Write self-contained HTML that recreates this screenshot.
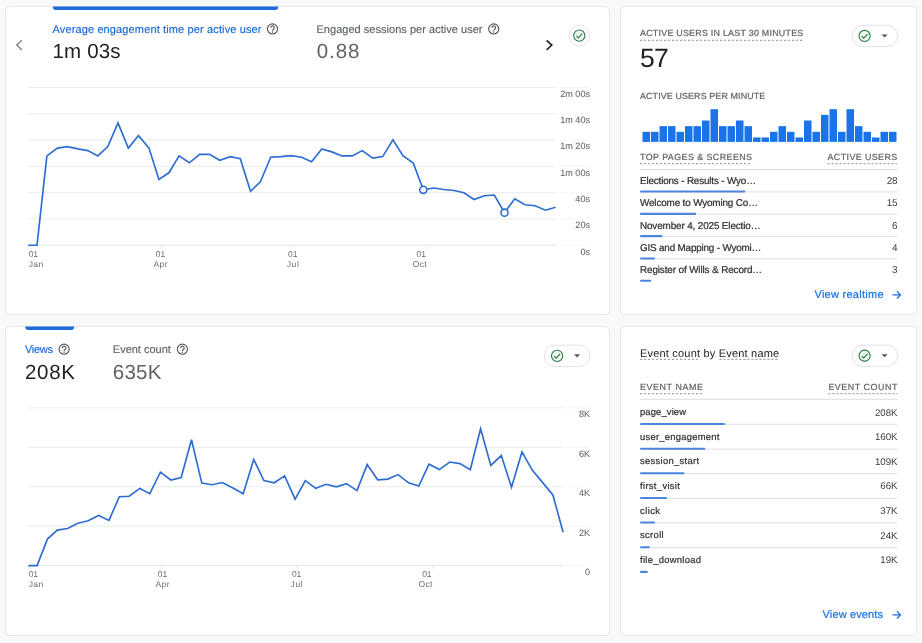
<!DOCTYPE html>
<html><head><meta charset="utf-8"><title>Analytics</title>
<style>
html,body{margin:0;padding:0}
body{width:922px;height:643px;overflow:hidden;background:#f8f9fa;font-family:"Liberation Sans",sans-serif;position:relative}
.card{position:absolute;background:#fff;border:1px solid #e6e8eb;border-radius:5px;box-sizing:border-box}
.t{position:absolute;white-space:nowrap;line-height:1;text-rendering:geometricPrecision}
svg{position:absolute;left:0;top:0}
</style></head><body>
<div class="card" style="left:5px;top:6px;width:605px;height:309px"></div>
<div class="card" style="left:620px;top:6px;width:297px;height:309px"></div>
<div class="card" style="left:5px;top:326px;width:605px;height:310px"></div>
<div class="card" style="left:620px;top:326px;width:297px;height:310px"></div>
<svg width="922" height="643" viewBox="0 0 922 643">
<line x1="28.2" x2="555.6" y1="87.50" y2="87.50" stroke="#ececee" stroke-width="1"/>
<line x1="28.2" x2="555.6" y1="113.78" y2="113.78" stroke="#ececee" stroke-width="1"/>
<line x1="28.2" x2="555.6" y1="140.06" y2="140.06" stroke="#ececee" stroke-width="1"/>
<line x1="28.2" x2="555.6" y1="166.34" y2="166.34" stroke="#ececee" stroke-width="1"/>
<line x1="28.2" x2="555.6" y1="192.62" y2="192.62" stroke="#ececee" stroke-width="1"/>
<line x1="28.2" x2="555.6" y1="218.90" y2="218.90" stroke="#ececee" stroke-width="1"/>
<line x1="28.2" x2="555.6" y1="245.18" y2="245.18" stroke="#e3e4e6" stroke-width="1"/>
<line x1="28.2" x2="563.3" y1="407.90" y2="407.90" stroke="#ececee" stroke-width="1"/>
<line x1="28.2" x2="563.3" y1="447.33" y2="447.33" stroke="#ececee" stroke-width="1"/>
<line x1="28.2" x2="563.3" y1="486.76" y2="486.76" stroke="#ececee" stroke-width="1"/>
<line x1="28.2" x2="563.3" y1="526.19" y2="526.19" stroke="#ececee" stroke-width="1"/>
<line x1="28.2" x2="563.3" y1="565.62" y2="565.62" stroke="#e3e4e6" stroke-width="1"/>
<line x1="558.5" x2="589.8" y1="87.50" y2="87.50" stroke="#f5f5f6" stroke-width="1"/>
<line x1="558.5" x2="589.8" y1="113.78" y2="113.78" stroke="#f5f5f6" stroke-width="1"/>
<line x1="558.5" x2="589.8" y1="140.06" y2="140.06" stroke="#f5f5f6" stroke-width="1"/>
<line x1="558.5" x2="589.8" y1="166.34" y2="166.34" stroke="#f5f5f6" stroke-width="1"/>
<line x1="558.5" x2="589.8" y1="192.62" y2="192.62" stroke="#f5f5f6" stroke-width="1"/>
<line x1="558.5" x2="589.8" y1="218.90" y2="218.90" stroke="#f5f5f6" stroke-width="1"/>
<line x1="558.5" x2="589.8" y1="245.18" y2="245.18" stroke="#f5f5f6" stroke-width="1"/>
<line x1="565.8" x2="589.8" y1="407.90" y2="407.90" stroke="#f5f5f6" stroke-width="1"/>
<line x1="565.8" x2="589.8" y1="447.33" y2="447.33" stroke="#f5f5f6" stroke-width="1"/>
<line x1="565.8" x2="589.8" y1="486.76" y2="486.76" stroke="#f5f5f6" stroke-width="1"/>
<line x1="565.8" x2="589.8" y1="526.19" y2="526.19" stroke="#f5f5f6" stroke-width="1"/>
<line x1="565.8" x2="589.8" y1="565.62" y2="565.62" stroke="#f5f5f6" stroke-width="1"/>
<line x1="28.7" x2="28.7" y1="245.2" y2="248.8" stroke="#ececee" stroke-width="1"/>
<line x1="160.4" x2="160.4" y1="245.2" y2="248.8" stroke="#ececee" stroke-width="1"/>
<line x1="292.9" x2="292.9" y1="245.2" y2="248.8" stroke="#ececee" stroke-width="1"/>
<line x1="426.5" x2="426.5" y1="245.2" y2="248.8" stroke="#ececee" stroke-width="1"/>
<line x1="28.7" x2="28.7" y1="565.6" y2="569.2" stroke="#ececee" stroke-width="1"/>
<line x1="162.2" x2="162.2" y1="565.6" y2="569.2" stroke="#ececee" stroke-width="1"/>
<line x1="296.6" x2="296.6" y1="565.6" y2="569.2" stroke="#ececee" stroke-width="1"/>
<line x1="432.5" x2="432.5" y1="565.6" y2="569.2" stroke="#ececee" stroke-width="1"/>
<polyline points="28.2,245.2 37,245.2 46.9,155.9 57.4,148.1 67.4,146.6 77.9,148.9 87.8,150.6 97.8,155.9 107.8,146.6 118,122.9 128.3,148.1 138.5,135.6 149,148.1 158.9,179.5 168.9,172.8 179.1,155.9 189.4,162.8 199.6,154.4 209.6,154.4 219.8,160.3 230.3,156.6 240.3,158.8 250.5,191.3 260.4,181.8 270.7,157.3 280.9,156.6 291.1,155.6 301.6,157.3 311.6,161.8 321.8,148.9 331.8,151.9 342,155.9 352.2,155.9 362.2,150.6 372.7,158.1 382.7,156.6 392.9,139.9 403.1,155.9 413.3,163.1 423.3,189.8 433.8,188 443.8,189.5 454,190.5 463.9,192.8 474.1,199.5 484.3,195.8 494.3,195 504.5,212.7 514.7,198.8 525,204.7 535.2,205.7 545.4,210.2 555.6,207.2" fill="none" stroke="#2d6dd2" stroke-width="1.65" stroke-linejoin="miter" stroke-linecap="butt"/>
<polyline points="28.4,565.6 37.1,565.6 47.4,539.1 57.3,530.1 67.6,528.5 77.9,523.2 88.2,520.8 98.7,515.5 109,520.4 119.3,496.8 129.2,496.2 139.8,488.4 149.8,493.7 160.4,472.2 170.9,480 181.2,477.5 191.5,439.8 201.8,483.1 212,484.7 222.3,482.5 232.9,488.1 243.2,493.7 253.7,459.4 263.9,480.6 274.2,482.8 284.6,475.9 295.1,499.1 305.3,480.6 315.8,488.3 326,484.3 336.3,486.8 346.5,483.6 357,490.6 367.2,464.6 377.7,479.8 387.9,479.1 398.1,474.6 408.6,482.8 418.8,486.1 429,464.2 439.4,469.6 449.7,462 459.9,463.6 470.3,469.8 480.6,428.7 490.8,465.4 501.3,455.6 511.5,487.3 522,451.9 532.2,470.1 542.7,482.6 552.9,495 563.1,532.2" fill="none" stroke="#2d6dd2" stroke-width="1.65" stroke-linejoin="miter" stroke-linecap="butt"/>
<circle cx="423.3" cy="189.8" r="3.55" fill="#fff" stroke="#2d6dd2" stroke-width="1.6"/>
<circle cx="504.5" cy="212.7" r="3.55" fill="#fff" stroke="#2d6dd2" stroke-width="1.6"/>
<rect x="642.50" y="131.80" width="7.5" height="10.10" fill="#1a73e8"/>
<rect x="651.00" y="131.80" width="7.5" height="10.10" fill="#1a73e8"/>
<rect x="659.50" y="126.15" width="7.5" height="15.75" fill="#1a73e8"/>
<rect x="668.00" y="126.15" width="7.5" height="15.75" fill="#1a73e8"/>
<rect x="676.50" y="131.80" width="7.5" height="10.10" fill="#1a73e8"/>
<rect x="685.00" y="126.15" width="7.5" height="15.75" fill="#1a73e8"/>
<rect x="693.50" y="126.15" width="7.5" height="15.75" fill="#1a73e8"/>
<rect x="702.00" y="120.50" width="7.5" height="21.40" fill="#1a73e8"/>
<rect x="710.50" y="109.20" width="7.5" height="32.70" fill="#1a73e8"/>
<rect x="719.00" y="126.15" width="7.5" height="15.75" fill="#1a73e8"/>
<rect x="727.50" y="126.15" width="7.5" height="15.75" fill="#1a73e8"/>
<rect x="736.00" y="120.50" width="7.5" height="21.40" fill="#1a73e8"/>
<rect x="744.50" y="126.15" width="7.5" height="15.75" fill="#1a73e8"/>
<rect x="753.00" y="137.45" width="7.5" height="4.45" fill="#1a73e8"/>
<rect x="761.50" y="137.45" width="7.5" height="4.45" fill="#1a73e8"/>
<rect x="770.00" y="131.80" width="7.5" height="10.10" fill="#1a73e8"/>
<rect x="778.50" y="126.15" width="7.5" height="15.75" fill="#1a73e8"/>
<rect x="787.00" y="131.80" width="7.5" height="10.10" fill="#1a73e8"/>
<rect x="795.50" y="137.45" width="7.5" height="4.45" fill="#1a73e8"/>
<rect x="804.00" y="120.50" width="7.5" height="21.40" fill="#1a73e8"/>
<rect x="812.50" y="131.80" width="7.5" height="10.10" fill="#1a73e8"/>
<rect x="821.00" y="114.85" width="7.5" height="27.05" fill="#1a73e8"/>
<rect x="829.50" y="109.20" width="7.5" height="32.70" fill="#1a73e8"/>
<rect x="838.00" y="131.80" width="7.5" height="10.10" fill="#1a73e8"/>
<rect x="846.50" y="109.20" width="7.5" height="32.70" fill="#1a73e8"/>
<rect x="855.00" y="126.15" width="7.5" height="15.75" fill="#1a73e8"/>
<rect x="863.50" y="131.80" width="7.5" height="10.10" fill="#1a73e8"/>
<rect x="872.00" y="137.45" width="7.5" height="4.45" fill="#1a73e8"/>
<rect x="880.50" y="131.80" width="7.5" height="10.10" fill="#1a73e8"/>
<rect x="889.00" y="131.80" width="7.5" height="10.10" fill="#1a73e8"/>
<line x1="640" x2="897.5" y1="169.5" y2="169.5" stroke="#d9dadc" stroke-width="1"/>
<line x1="640" x2="897.5" y1="191.90" y2="191.90" stroke="#e5e5e7" stroke-width="1.2"/>
<rect x="640" y="190.50" width="105.3" height="2.1" rx="1" fill="#4a86de"/>
<line x1="640" x2="897.5" y1="214.20" y2="214.20" stroke="#e5e5e7" stroke-width="1.2"/>
<rect x="640" y="212.80" width="56.2" height="2.1" rx="1" fill="#4a86de"/>
<line x1="640" x2="897.5" y1="236.50" y2="236.50" stroke="#e5e5e7" stroke-width="1.2"/>
<rect x="640" y="235.10" width="22.5" height="2.1" rx="1" fill="#4a86de"/>
<line x1="640" x2="897.5" y1="258.80" y2="258.80" stroke="#e5e5e7" stroke-width="1.2"/>
<rect x="640" y="257.40" width="15" height="2.1" rx="1" fill="#4a86de"/>
<rect x="640" y="279.70" width="11.2" height="2.1" rx="1" fill="#4a86de"/>
<line x1="640" x2="897.5" y1="399.2" y2="399.2" stroke="#d9dadc" stroke-width="1"/>
<line x1="640" x2="897.5" y1="424.40" y2="424.40" stroke="#e5e5e7" stroke-width="1.2"/>
<rect x="640" y="423.00" width="85" height="2.1" rx="1" fill="#4a86de"/>
<line x1="640" x2="897.5" y1="449.03" y2="449.03" stroke="#e5e5e7" stroke-width="1.2"/>
<rect x="640" y="447.63" width="65.4" height="2.1" rx="1" fill="#4a86de"/>
<line x1="640" x2="897.5" y1="473.66" y2="473.66" stroke="#e5e5e7" stroke-width="1.2"/>
<rect x="640" y="472.26" width="44.5" height="2.1" rx="1" fill="#4a86de"/>
<line x1="640" x2="897.5" y1="498.29" y2="498.29" stroke="#e5e5e7" stroke-width="1.2"/>
<rect x="640" y="496.89" width="27" height="2.1" rx="1" fill="#4a86de"/>
<line x1="640" x2="897.5" y1="522.92" y2="522.92" stroke="#e5e5e7" stroke-width="1.2"/>
<rect x="640" y="521.52" width="15.1" height="2.1" rx="1" fill="#4a86de"/>
<line x1="640" x2="897.5" y1="547.55" y2="547.55" stroke="#e5e5e7" stroke-width="1.2"/>
<rect x="640" y="546.15" width="9.8" height="2.1" rx="1" fill="#4a86de"/>
<rect x="640" y="570.78" width="7.8" height="2.1" rx="1" fill="#4a86de"/>
<line x1="640" x2="803.4" y1="40.4" y2="40.4" stroke="#a3a8ad" stroke-width="1.25" stroke-dasharray="2.2 1.8"/>
<line x1="640" x2="752.2" y1="163.7" y2="163.7" stroke="#a3a8ad" stroke-width="1.25" stroke-dasharray="2.2 1.8"/>
<line x1="827.5" x2="897.2" y1="163.7" y2="163.7" stroke="#a3a8ad" stroke-width="1.25" stroke-dasharray="2.2 1.8"/>
<line x1="640" x2="700.3" y1="359.3" y2="359.3" stroke="#a3a8ad" stroke-width="1.25" stroke-dasharray="2.2 1.8"/>
<line x1="719.3" x2="779.2" y1="359.3" y2="359.3" stroke="#a3a8ad" stroke-width="1.25" stroke-dasharray="2.2 1.8"/>
<line x1="640" x2="703" y1="393.7" y2="393.7" stroke="#a3a8ad" stroke-width="1.25" stroke-dasharray="2.2 1.8"/>
<line x1="828.4" x2="897.5" y1="393.7" y2="393.7" stroke="#a3a8ad" stroke-width="1.25" stroke-dasharray="2.2 1.8"/>
<path d="M52.8 6.5 H278.2 V7 a3 3 0 0 1 -3 3 H55.8 a3 3 0 0 1 -3 -3 Z" fill="#1f6bda"/>
<path d="M25.3 326.5 H74.2 V327 a3 3 0 0 1 -3 3 H28.3 a3 3 0 0 1 -3 -3 Z" fill="#1f6bda"/>
<polyline points="21.8,40.3 16.7,45.1 21.8,49.9" fill="none" stroke="#868a8f" stroke-width="1.45"/>
<polyline points="546.6,40.3 551.8,45.1 546.6,49.9" fill="none" stroke="#202124" stroke-width="1.6"/>
<g transform="translate(272.5,28.9)"><circle r="5.05" fill="none" stroke="#55595e" stroke-width="1.15"/><path d="M-1.8 -1.2 a1.8 1.8 0 1 1 2.8 1.5 c-0.7 0.45 -1 0.8 -1 1.5" fill="none" stroke="#55595e" stroke-width="1.15"/><circle cx="0" cy="3.1" r="0.7" fill="#55595e"/></g>
<g transform="translate(493.7,28.9)"><circle r="5.05" fill="none" stroke="#55595e" stroke-width="1.15"/><path d="M-1.8 -1.2 a1.8 1.8 0 1 1 2.8 1.5 c-0.7 0.45 -1 0.8 -1 1.5" fill="none" stroke="#55595e" stroke-width="1.15"/><circle cx="0" cy="3.1" r="0.7" fill="#55595e"/></g>
<g transform="translate(64.1,349.2)"><circle r="5.05" fill="none" stroke="#55595e" stroke-width="1.15"/><path d="M-1.8 -1.2 a1.8 1.8 0 1 1 2.8 1.5 c-0.7 0.45 -1 0.8 -1 1.5" fill="none" stroke="#55595e" stroke-width="1.15"/><circle cx="0" cy="3.1" r="0.7" fill="#55595e"/></g>
<g transform="translate(182.4,349.2)"><circle r="5.05" fill="none" stroke="#55595e" stroke-width="1.15"/><path d="M-1.8 -1.2 a1.8 1.8 0 1 1 2.8 1.5 c-0.7 0.45 -1 0.8 -1 1.5" fill="none" stroke="#55595e" stroke-width="1.15"/><circle cx="0" cy="3.1" r="0.7" fill="#55595e"/></g>
<circle cx="579.3" cy="35.6" r="10.3" fill="#fff" stroke="#e2e3e6" stroke-width="1"/>
<g transform="translate(579.3,35.6)"><circle r="5.6" fill="#f1f9f3" stroke="#2a7a45" stroke-width="1.1"/><polyline points="-2.9,0.3 -0.9,2.3 3,-1.9" fill="none" stroke="#2a7a45" stroke-width="1.15"/></g>
<rect x="852" y="25.3" width="45.5" height="21.3" rx="10.65" fill="#fff" stroke="#e2e3e6" stroke-width="1"/>
<g transform="translate(864.6,35.95)"><circle r="5.6" fill="#f1f9f3" stroke="#2a7a45" stroke-width="1.1"/><polyline points="-2.9,0.3 -0.9,2.3 3,-1.9" fill="none" stroke="#2a7a45" stroke-width="1.15"/></g>
<path d="M881.6 34.45 h6 l-3 3.1 z" fill="#55585c"/>
<rect x="544.5" y="345.2" width="45.5" height="21.3" rx="10.65" fill="#fff" stroke="#e2e3e6" stroke-width="1"/>
<g transform="translate(557.1,355.84999999999997)"><circle r="5.6" fill="#f1f9f3" stroke="#2a7a45" stroke-width="1.1"/><polyline points="-2.9,0.3 -0.9,2.3 3,-1.9" fill="none" stroke="#2a7a45" stroke-width="1.15"/></g>
<path d="M574.1 354.34999999999997 h6 l-3 3.1 z" fill="#55585c"/>
<rect x="852" y="345.1" width="45.5" height="21.3" rx="10.65" fill="#fff" stroke="#e2e3e6" stroke-width="1"/>
<g transform="translate(864.6,355.75)"><circle r="5.6" fill="#f1f9f3" stroke="#2a7a45" stroke-width="1.1"/><polyline points="-2.9,0.3 -0.9,2.3 3,-1.9" fill="none" stroke="#2a7a45" stroke-width="1.15"/></g>
<path d="M881.6 354.25 h6 l-3 3.1 z" fill="#55585c"/>
<path d="M892.6 294.9 h7.7 M896.90 291.30 l3.6 3.6 l-3.6 3.6" fill="none" stroke="#1a73e8" stroke-width="1.25"/>
<path d="M892.6 614.9 h7.7 M896.90 611.30 l3.6 3.6 l-3.6 3.6" fill="none" stroke="#1a73e8" stroke-width="1.25"/>
</svg>
<div id="txt" style="position:absolute;left:0;top:0;width:922px;height:643px;will-change:transform">
<span class="t" style="left:52.50px;top:25px;font-size:11px;color:#1967d2;letter-spacing:0.131px;-webkit-text-stroke:0.15px #1967d2;">Average engagement time per active user</span>
<span class="t" style="left:52.50px;top:42px;font-size:20.5px;color:#202124;letter-spacing:0.155px;">1m 03s</span>
<span class="t" style="left:316.50px;top:25px;font-size:11px;color:#5f6368;letter-spacing:0.029px;-webkit-text-stroke:0.15px #5f6368;">Engaged sessions per active user</span>
<span class="t" style="left:316.80px;top:42px;font-size:20.5px;color:#5f6368;letter-spacing:0.867px;">0.88</span>
<span class="t" style="left:560.18px;top:90px;font-size:9.1px;color:#686c71;-webkit-text-stroke:0.1px #686c71;">2m 00s</span>
<span class="t" style="left:560.18px;top:116px;font-size:9.1px;color:#686c71;-webkit-text-stroke:0.1px #686c71;">1m 40s</span>
<span class="t" style="left:560.18px;top:142px;font-size:9.1px;color:#686c71;-webkit-text-stroke:0.1px #686c71;">1m 20s</span>
<span class="t" style="left:560.18px;top:169px;font-size:9.1px;color:#686c71;-webkit-text-stroke:0.1px #686c71;">1m 00s</span>
<span class="t" style="left:575.34px;top:195px;font-size:9.1px;color:#686c71;-webkit-text-stroke:0.1px #686c71;">40s</span>
<span class="t" style="left:575.34px;top:221px;font-size:9.1px;color:#686c71;-webkit-text-stroke:0.1px #686c71;">20s</span>
<span class="t" style="left:580.40px;top:248px;font-size:9.1px;color:#686c71;-webkit-text-stroke:0.1px #686c71;">0s</span>
<span class="t" style="left:28.70px;top:250px;font-size:8.5px;color:#676b70;letter-spacing:-0.055px;">01</span>
<span class="t" style="left:28.70px;top:260px;font-size:8.5px;color:#676b70;letter-spacing:0.398px;">Jan</span>
<span class="t" style="left:155.80px;top:250px;font-size:8.5px;color:#676b70;letter-spacing:-0.055px;">01</span>
<span class="t" style="left:153.50px;top:260px;font-size:8.5px;color:#676b70;letter-spacing:0.386px;">Apr</span>
<span class="t" style="left:288.10px;top:250px;font-size:8.5px;color:#676b70;letter-spacing:-0.055px;">01</span>
<span class="t" style="left:286.80px;top:260px;font-size:8.5px;color:#676b70;letter-spacing:0.567px;">Jul</span>
<span class="t" style="left:416.50px;top:250px;font-size:8.5px;color:#676b70;letter-spacing:-0.055px;">01</span>
<span class="t" style="left:412.70px;top:260px;font-size:8.5px;color:#676b70;letter-spacing:0.388px;">Oct</span>
<span class="t" style="left:640.00px;top:29px;font-size:8.9px;color:#5f6368;letter-spacing:0.252px;-webkit-text-stroke:0.22px #5f6368;">ACTIVE USERS IN LAST 30 MINUTES</span>
<span class="t" style="left:640.00px;top:45px;font-size:26.5px;color:#202124;letter-spacing:-0.776px;">57</span>
<span class="t" style="left:640.00px;top:92px;font-size:8.9px;color:#5f6368;letter-spacing:0.132px;-webkit-text-stroke:0.22px #5f6368;">ACTIVE USERS PER MINUTE</span>
<span class="t" style="left:640.00px;top:153px;font-size:8.9px;color:#5f6368;letter-spacing:0.443px;-webkit-text-stroke:0.22px #5f6368;">TOP PAGES &amp; SCREENS</span>
<span class="t" style="left:827.50px;top:153px;font-size:8.9px;color:#5f6368;letter-spacing:0.418px;-webkit-text-stroke:0.22px #5f6368;">ACTIVE USERS</span>
<span class="t" style="left:640.00px;top:177px;font-size:9.9px;color:#303134;letter-spacing:-0.163px;-webkit-text-stroke:0.24px #303134;">Elections - Results - Wyo…</span>
<span class="t" style="left:886.70px;top:177px;font-size:10px;color:#3c4043;letter-spacing:-0.223px;">28</span>
<span class="t" style="left:640.00px;top:199px;font-size:9.9px;color:#303134;letter-spacing:-0.143px;-webkit-text-stroke:0.24px #303134;">Welcome to Wyoming Co…</span>
<span class="t" style="left:886.70px;top:199px;font-size:10px;color:#3c4043;letter-spacing:-0.223px;">15</span>
<span class="t" style="left:640.00px;top:222px;font-size:9.9px;color:#303134;letter-spacing:-0.125px;-webkit-text-stroke:0.24px #303134;">November 4, 2025 Electio…</span>
<span class="t" style="left:892.04px;top:222px;font-size:10px;color:#3c4043;">6</span>
<span class="t" style="left:640.00px;top:244px;font-size:9.9px;color:#303134;letter-spacing:-0.178px;-webkit-text-stroke:0.24px #303134;">GIS and Mapping - Wyomi…</span>
<span class="t" style="left:892.04px;top:244px;font-size:10px;color:#3c4043;">4</span>
<span class="t" style="left:640.00px;top:266px;font-size:9.9px;color:#303134;letter-spacing:-0.112px;-webkit-text-stroke:0.24px #303134;">Register of Wills &amp; Record…</span>
<span class="t" style="left:892.04px;top:266px;font-size:10px;color:#3c4043;">3</span>
<span class="t" style="left:814.50px;top:290px;font-size:11px;color:#1a73e8;letter-spacing:0.265px;-webkit-text-stroke:0.22px #1a73e8;">View realtime</span>
<span class="t" style="left:25.00px;top:345px;font-size:11px;color:#1967d2;letter-spacing:-0.311px;-webkit-text-stroke:0.15px #1967d2;">Views</span>
<span class="t" style="left:25.00px;top:363px;font-size:20.5px;color:#202124;letter-spacing:0.674px;">208K</span>
<span class="t" style="left:112.80px;top:345px;font-size:11px;color:#5f6368;-webkit-text-stroke:0.15px #5f6368;">Event count</span>
<span class="t" style="left:112.80px;top:363px;font-size:20.5px;color:#5f6368;letter-spacing:0.241px;">635K</span>
<span class="t" style="left:578.88px;top:410px;font-size:9.1px;color:#686c71;-webkit-text-stroke:0.1px #686c71;">8K</span>
<span class="t" style="left:578.88px;top:450px;font-size:9.1px;color:#686c71;-webkit-text-stroke:0.1px #686c71;">6K</span>
<span class="t" style="left:578.88px;top:489px;font-size:9.1px;color:#686c71;-webkit-text-stroke:0.1px #686c71;">4K</span>
<span class="t" style="left:578.88px;top:529px;font-size:9.1px;color:#686c71;-webkit-text-stroke:0.1px #686c71;">2K</span>
<span class="t" style="left:584.94px;top:568px;font-size:9.1px;color:#686c71;-webkit-text-stroke:0.1px #686c71;">0</span>
<span class="t" style="left:28.70px;top:570px;font-size:8.5px;color:#676b70;letter-spacing:-0.055px;">01</span>
<span class="t" style="left:28.70px;top:580px;font-size:8.5px;color:#676b70;letter-spacing:0.398px;">Jan</span>
<span class="t" style="left:157.80px;top:570px;font-size:8.5px;color:#676b70;letter-spacing:-0.055px;">01</span>
<span class="t" style="left:155.50px;top:580px;font-size:8.5px;color:#676b70;letter-spacing:0.386px;">Apr</span>
<span class="t" style="left:291.90px;top:570px;font-size:8.5px;color:#676b70;letter-spacing:-0.055px;">01</span>
<span class="t" style="left:290.60px;top:580px;font-size:8.5px;color:#676b70;letter-spacing:0.567px;">Jul</span>
<span class="t" style="left:422.20px;top:570px;font-size:8.5px;color:#676b70;letter-spacing:-0.055px;">01</span>
<span class="t" style="left:418.40px;top:580px;font-size:8.5px;color:#676b70;letter-spacing:0.388px;">Oct</span>
<span class="t" style="left:640.00px;top:349px;font-size:11px;color:#202124;letter-spacing:0.195px;">Event count by Event name</span>
<span class="t" style="left:640.00px;top:383px;font-size:8.9px;color:#5f6368;letter-spacing:0.589px;-webkit-text-stroke:0.22px #5f6368;">EVENT NAME</span>
<span class="t" style="left:828.40px;top:383px;font-size:8.9px;color:#5f6368;letter-spacing:0.549px;-webkit-text-stroke:0.22px #5f6368;">EVENT COUNT</span>
<span class="t" style="left:640.00px;top:407px;font-size:9.4px;color:#303134;letter-spacing:0.147px;-webkit-text-stroke:0.22px #303134;">page_view</span>
<span class="t" style="left:874.88px;top:409px;font-size:9.7px;color:#3c4043;">208K</span>
<span class="t" style="left:640.00px;top:432px;font-size:9.4px;color:#303134;letter-spacing:0.266px;-webkit-text-stroke:0.22px #303134;">user_engagement</span>
<span class="t" style="left:874.88px;top:433px;font-size:9.7px;color:#3c4043;">160K</span>
<span class="t" style="left:640.00px;top:456px;font-size:9.4px;color:#303134;letter-spacing:0.322px;-webkit-text-stroke:0.22px #303134;">session_start</span>
<span class="t" style="left:874.88px;top:458px;font-size:9.7px;color:#3c4043;">109K</span>
<span class="t" style="left:640.00px;top:481px;font-size:9.4px;color:#303134;letter-spacing:0.344px;-webkit-text-stroke:0.22px #303134;">first_visit</span>
<span class="t" style="left:880.26px;top:482px;font-size:9.7px;color:#3c4043;">66K</span>
<span class="t" style="left:640.00px;top:506px;font-size:9.4px;color:#303134;letter-spacing:0.443px;-webkit-text-stroke:0.22px #303134;">click</span>
<span class="t" style="left:880.26px;top:507px;font-size:9.7px;color:#3c4043;">37K</span>
<span class="t" style="left:640.00px;top:530px;font-size:9.4px;color:#303134;letter-spacing:0.365px;-webkit-text-stroke:0.22px #303134;">scroll</span>
<span class="t" style="left:880.26px;top:532px;font-size:9.7px;color:#3c4043;">24K</span>
<span class="t" style="left:640.00px;top:555px;font-size:9.4px;color:#303134;letter-spacing:0.305px;-webkit-text-stroke:0.22px #303134;">file_download</span>
<span class="t" style="left:880.26px;top:556px;font-size:9.7px;color:#3c4043;">19K</span>
<span class="t" style="left:822.60px;top:610px;font-size:11px;color:#1a73e8;letter-spacing:0.129px;-webkit-text-stroke:0.22px #1a73e8;">View events</span>
</div>
</body></html>
